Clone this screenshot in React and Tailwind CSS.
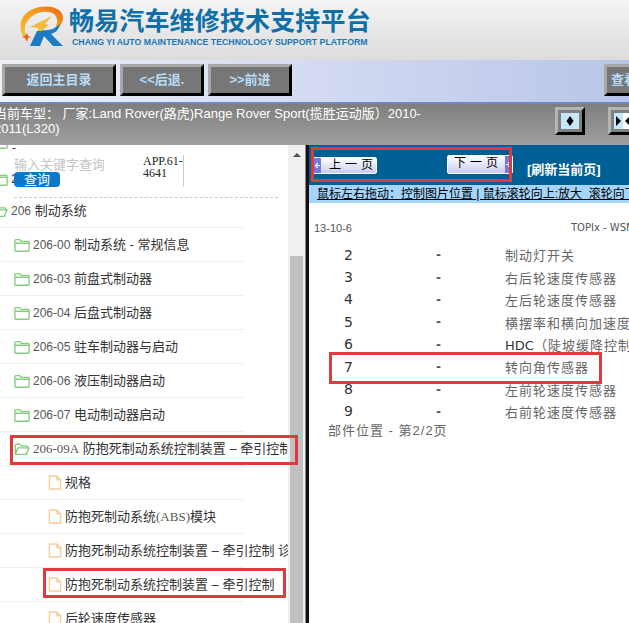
import { ArrowLeft, ArrowRight } from 'lucide-react';

const FolderIcon = ({ open }) => (
  <svg className="h-[16px] w-[16px] shrink-0" viewBox="0 0 18 17" fill="none" stroke="#84cc7e" strokeWidth="1.5" strokeLinejoin="round">
    {open ? (
      <path d="M1.5 14.5V4.2q0-1 1-1h4l1.5 1.8h6.5q1 0 1 1V7M1.5 14.5h12.5L17 7.2H4.5z" />
    ) : (
      <path d="M1 14.5V3.5q0-1 1-1h4.5L8 4.5h8q1 0 1 1v9q0 1-1 1H2q-1 0-1-1zM1 6.5h16" />
    )}
  </svg>
);

const FileIcon = () => (
  <svg className="h-[17px] w-[14px] shrink-0" viewBox="0 0 15 17" fill="none" stroke="#f6cf9f" strokeWidth="1.5" strokeLinejoin="round">
    <path d="M1.5 1.5h8l4 4v10h-12zM9.5 1.5v4h4" />
  </svg>
);

const Logo = () => (
  <svg className="h-[42px] w-[46px] shrink-0" viewBox="0 0 46 42" fill="none">
    <defs>
      <linearGradient id="ring" x1="0" y1="1" x2="1" y2="0">
        <stop offset="0" stopColor="#f7c330" />
        <stop offset="0.6" stopColor="#f39a1e" />
        <stop offset="1" stopColor="#e8651a" />
      </linearGradient>
    </defs>
    <path d="M6 33C-2 20 4 5 22 2c12-2 23 2 23 11 0 6-5 11-10 13 4-5 6-11 2-16-5-5-17-4-24 2C6 18 5 26 9 31z" fill="url(#ring)" />
    <path d="M12 22L34 11l-7 8 4 1-14 11 4-8z" fill="#f6b93a" />
    <path d="M9 28l1 3 3 1-3 1-1 4-2-4-3-1 3-1z" fill="#e8601c" />
    <path d="M12 41l7-15h9l-6 15z" fill="#1a7cc4" />
    <path d="M24 25c8 1 14-2 18-6-1 6-5 9-9 10l12 12H35L25 30z" fill="#1a7cc4" />
  </svg>
);

const ToolBtn = ({ className, children }) => (
  <div className={`flex h-[32px] items-center justify-center border-[3px] border-b-black border-l-[#a8a8a8] border-r-black border-t-[#a8a8a8] bg-[#777777] text-[13px] font-bold text-[#b9dcf7] ${className}`}>
    {children}
  </div>
);

const ArrowBtn = ({ children }) => (
  <div className="h-[28px] w-[30px] shrink-0 border-[3px] border-b-black border-l-[#b5b5b5] border-r-black border-t-[#b5b5b5] bg-[#808080] p-[3px]">
    {children}
  </div>
);

const PageBtn = ({ label, side, className }) => (
  <div className={`flex items-stretch overflow-hidden rounded-[2px] border border-white bg-gradient-to-b from-[#ffffff] to-[#c9cdf0] text-[12px] leading-[15px] text-black ${className}`}>
    {side === 'left' && (
      <span className="flex w-[7px] items-center justify-center bg-[#717ae0]">
        <ArrowLeft className="h-[7px] w-[7px] shrink-0 text-white" strokeWidth={4} />
      </span>
    )}
    <span className={`flex-1 whitespace-nowrap tracking-[4px] ${side === 'left' ? 'pl-[8px]' : 'pl-[6px]'}`}>{label}</span>
    {side === 'right' && (
      <span className="flex w-[7px] items-center justify-center bg-[#717ae0]">
        <ArrowRight className="h-[7px] w-[7px] shrink-0 text-white" strokeWidth={4} />
      </span>
    )}
  </div>
);

const TreeRow = ({ indent, icon, children }) => (
  <div className={`flex h-[33px] items-center gap-[1px] ${indent}`}>
    {icon}
    <span className="whitespace-nowrap pl-[2px]">{children}</span>
  </div>
);

const Rule = () => <div className="h-px w-[245px] bg-[#f0f0f0]" />;

const Code = ({ children }) => <span className="text-[12px] text-[#555555]">{children}</span>;

const folders = [
  ['206-00', '制动系统 - 常规信息'],
  ['206-03', '前盘式制动器'],
  ['206-04', '后盘式制动器'],
  ['206-05', '驻车制动器与启动'],
  ['206-06', '液压制动器启动'],
  ['206-07', '电动制动器启动'],
];

const parts = [
  ['2', '制动灯开关'],
  ['3', '右后轮速度传感器'],
  ['4', '左后轮速度传感器'],
  ['5', '横摆率和横向加速度传感器'],
  ['6', '（陡坡缓降控制）开关', 'HDC'],
  ['7', '转向角传感器'],
  ['8', '左前轮速度传感器'],
  ['9', '右前轮速度传感器'],
];

export default function App() {
  return (
    <div className="relative h-[623px] w-[629px] overflow-hidden bg-white font-['Liberation_Sans','Noto_Sans_CJK_SC',sans-serif] text-[12px]">
      {/* header */}
      <div className="flex h-[60px] items-start bg-gradient-to-b from-[#f4f4f4] to-[#dcdcdc] pl-[18px] pt-[5px]">
        <Logo />
        <div className="ml-[5px] flex flex-col pt-[1px]">
          <span className="whitespace-nowrap text-[25px] font-bold leading-[30px] tracking-[0.15px] text-[#0f6fa8]">畅易汽车维修技术支持平台</span>
          <span className="ml-[3px] mt-[1px] whitespace-nowrap text-[8.75px] font-bold leading-[11px] text-[#1b78b4]">CHANG YI AUTO MAINTENANCE TECHNOLOGY SUPPORT PLATFORM</span>
        </div>
      </div>

      {/* toolbar */}
      <div className="flex h-[44px] items-start gap-[4px] border-b-2 border-[#6f86c8] bg-gradient-to-r from-[#eef1fb] to-[#b9c4e8] pl-[2px] pt-[4px]">
        <ToolBtn className="w-[114px]">返回主目录</ToolBtn>
        <ToolBtn className="w-[84px]">&lt;&lt;后退.</ToolBtn>
        <ToolBtn className="w-[84px]">&gt;&gt;前进</ToolBtn>
        <ToolBtn className="ml-auto mr-[-20px] w-[45px] !justify-start pl-[4px]">查看</ToolBtn>
      </div>

      {/* model info bar */}
      <div className="flex h-[41px] items-start bg-gradient-to-b from-[#7e7e7e] to-[#a0a0a0] pt-[2px]">
        <div className="-ml-[6px] w-[428px] shrink-0 text-[13px] leading-[15px] text-white">当前车型： 厂家:Land Rover(路虎)Range Rover Sport(揽胜运动版）2010-2011(L320)</div>
        <div className="ml-[133px] mt-[1px] flex gap-[23px]">
          <ArrowBtn>
            <svg className="block h-full w-full bg-[#c4e8f8]" viewBox="0 0 18 16">
              <path d="M9 3l3.5 5L9 13 5.500 8z" fill="#000000" />
            </svg>
          </ArrowBtn>
          <ArrowBtn>
            <svg className="block h-full w-full" viewBox="0 0 18 16">
              <rect width="9" height="16" fill="#c4e8f8" />
              <rect x="9" width="9" height="16" fill="#ffffff" />
              <path d="M2 3l5 5-5 5zM16 3l-5 5 5 5z" fill="#000000" />
            </svg>
          </ArrowBtn>
        </div>
      </div>

      <div className="flex h-[478px]">
        {/* tree */}
        <div className="w-[288px] shrink-0 overflow-hidden text-[13px] leading-[16px] text-[#333333]">
          <div className="relative h-[52px] overflow-hidden pl-[14px] pt-[12px]">
            <div className="absolute -left-[8px] -top-[11px]"><FolderIcon /></div>
            <span className="absolute left-[12px] -top-[3px] text-[12px] leading-[12px]">-</span>
            <div className="absolute -left-[8px] top-[26px]"><FolderIcon /></div>
            <span className="absolute left-[11px] top-[27px] leading-[14px]">2</span>
            <div className="relative flex">
              <div className="w-[129px]">
                <div className="w-[90px] overflow-hidden whitespace-nowrap leading-[15px] text-[#c4c4c4]">输入关键字查询</div>
                <div className="h-[15px] w-[46px] rounded-[4px] bg-[#0d78c8] text-center leading-[15px] text-white">查询</div>
              </div>
              <div className="-mt-[2px] h-[32px] w-[41px] border-r border-[#cccccc] font-['Liberation_Serif',serif] text-[12px] leading-[12px] text-[#222222]">APP.61-4641</div>
            </div>
          </div>
          <div className="ml-[14px] w-[264px] border-t border-dashed border-[#cccccc]" />
          <div className="-ml-[8px] flex h-[29px] items-center gap-[1px] pb-[4px]">
            <FolderIcon open />
            <span className="pl-[2px]"><Code>206</Code> 制动系统</span>
          </div>
          <Rule />
          {folders.map(([code, name]) => (
            <div key={code}>
              <TreeRow indent="pl-[14px]" icon={<FolderIcon />}><Code>{code}</Code> {name}</TreeRow>
              <Rule />
            </div>
          ))}
          <TreeRow indent="pl-[14px]" icon={<FolderIcon open />}>
            <span className="font-['Liberation_Serif',serif] text-[#555555]">206-09A</span> 防抱死制动系统控制装置 – 牵引控制
          </TreeRow>
          <Rule />
          <TreeRow indent="pl-[48px]" icon={<FileIcon />}>规格</TreeRow>
          <Rule />
          <TreeRow indent="pl-[48px]" icon={<FileIcon />}>
            防抱死制动系统<span className="font-['Liberation_Serif',serif] text-[#555555]">(ABS)</span>模块
          </TreeRow>
          <Rule />
          <TreeRow indent="pl-[48px]" icon={<FileIcon />}>防抱死制动系统控制装置 – 牵引控制 诊断</TreeRow>
          <Rule />
          <TreeRow indent="pl-[48px]" icon={<FileIcon />}>防抱死制动系统控制装置 – 牵引控制</TreeRow>
          <Rule />
          <TreeRow indent="pl-[48px]" icon={<FileIcon />}>后轮速度传感器</TreeRow>
        </div>

        {/* scrollbar */}
        <div className="flex w-[17px] shrink-0 flex-col items-center bg-[#f0f0f0] pt-[8px]">
          <div className="h-0 w-0 border-x-[4px] border-b-[4px] border-x-transparent border-b-[#505050]" />
          <div className="mt-[99px] w-[13px] flex-1 bg-[#c1c1c1]" />
        </div>
        <div className="w-px shrink-0 bg-[#888888]" />
        <div className="w-[3px] shrink-0 bg-[#111111]" />

        {/* document pane */}
        <div className="flex min-w-0 flex-1 flex-col overflow-hidden">
          <div className="flex h-[40px] shrink-0 items-start bg-[#005f94] pl-[4px]">
            <PageBtn label="上一页" side="left" className="mt-[12px] h-[17px] w-[64px] shrink-0" />
            <PageBtn label="下一页" side="right" className="ml-[70px] mt-[10px] h-[19px] w-[66px] shrink-0" />
            <span className="ml-[14px] mt-[17px] whitespace-nowrap text-[13px] font-bold leading-[15px] text-white">[刷新当前页]</span>
          </div>
          <div className="h-[18px] shrink-0 whitespace-nowrap bg-[#a5d5fb] pl-[8px] text-[12px] leading-[19px] text-black underline">鼠标左右拖动：控制图片位置 | 鼠标滚轮向上:放大&nbsp;&nbsp;滚轮向下:缩小</div>
          <div className="flex whitespace-nowrap pl-[5px] pt-[19px] leading-[12px] text-[#555555]">
            <span className="w-[257px] shrink-0 text-[11px]">13-10-6</span>
            <span className="shrink-0 font-['DejaVu_Sans',sans-serif] text-[10px]">TOPIx - WSM</span>
          </div>
          <div className="mt-[10px]">
            {parts.map(([n, name, latin]) => (
              <div key={n} className="flex h-[22.4px] items-center whitespace-nowrap">
                <span className="w-[127px] shrink-0 pl-[35px] font-['DejaVu_Sans',sans-serif] text-[14px] text-[#333333]">{n}</span>
                <span className="w-[69px] shrink-0 font-['DejaVu_Sans',sans-serif] text-[12px] font-bold text-[#555555]">-</span>
                <span className="shrink-0 font-['Noto_Sans_CJK_SC',sans-serif] text-[13px] tracking-[1px] text-[#666666]">
                  {latin && <span className="font-['DejaVu_Sans',sans-serif] tracking-normal text-[#333333]">{latin}</span>}
                  {name}
                </span>
              </div>
            ))}
          </div>
          <div className="mt-[1px] whitespace-nowrap pl-[19px] text-[13px] leading-[14px] tracking-[1px] text-[#666666]">部件位置 - 第2/2页</div>
        </div>
      </div>

      {/* red annotation boxes */}
      <div className="absolute left-[311px] top-[147px] h-[35px] w-[201px] border-[3px] border-[#e0393e]" />
      <div className="absolute left-[10px] top-[435px] h-[30px] w-[288px] border-[3px] border-[#e0393e]" />
      <div className="absolute left-[43px] top-[568px] h-[30px] w-[243px] border-[3px] border-[#e0393e]" />
      <div className="absolute left-[329px] top-[352px] h-[32px] w-[273px] border-[3px] border-[#e0393e]" />
    </div>
  );
}
